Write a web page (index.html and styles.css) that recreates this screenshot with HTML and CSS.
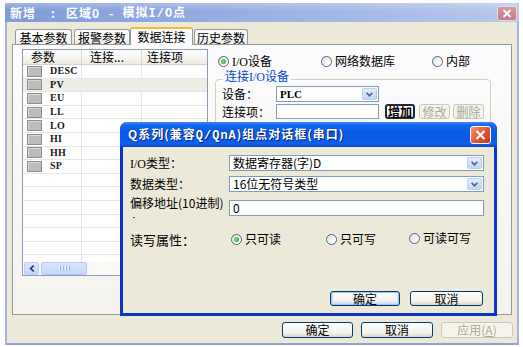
FILE: index.html
```html
<!DOCTYPE html>
<html lang="zh-CN">
<head>
<meta charset="utf-8">
<title>新增 : 区域0 - 模拟I/O点</title>
<link rel="stylesheet" href="styles.css">
</head>
<body>
<div class="window">
  <div class="titlebar">
    <div class="title"><span>新增</span><span class="sep1">:</span><span>区域0</span><span class="sep2">-</span><span>模拟<span class="mono">I/O</span>点</span></div>
    <div class="close-inactive"><svg width="10" height="9" viewBox="0 0 10 9"><path d="M1.5 1L8.5 8M8.5 1L1.5 8" stroke="#fff" stroke-width="1.8"/></svg></div>
  </div>
  <div class="content">
    <div class="tabs">
      <div class="tab t1">基本参数</div>
      <div class="tab t2">报警参数</div>
      <div class="tab t3 active">数据连接</div>
      <div class="tab t4">历史参数</div>
    </div>
    <div class="panel">
      <div class="list">
        <div class="lhead"><div class="c1">参数</div><div class="c2">连接...</div><div class="c3">连接项</div></div>
        <div class="lbody">
          <div class="row"><div class="c1"><i class="ico"></i><span class="pn">DESC</span></div><div class="c2"></div><div class="c3"></div></div>
          <div class="row sel"><div class="c1"><i class="ico"></i><span class="pn">PV</span></div><div class="c2"></div><div class="c3"></div></div>
          <div class="row"><div class="c1"><i class="ico"></i><span class="pn">EU</span></div><div class="c2"></div><div class="c3"></div></div>
          <div class="row"><div class="c1"><i class="ico"></i><span class="pn">LL</span></div><div class="c2"></div><div class="c3"></div></div>
          <div class="row"><div class="c1"><i class="ico"></i><span class="pn">LO</span></div><div class="c2"></div><div class="c3"></div></div>
          <div class="row"><div class="c1"><i class="ico"></i><span class="pn">HI</span></div><div class="c2"></div><div class="c3"></div></div>
          <div class="row"><div class="c1"><i class="ico"></i><span class="pn">HH</span></div><div class="c2"></div><div class="c3"></div></div>
          <div class="row"><div class="c1"><i class="ico"></i><span class="pn">SP</span></div><div class="c2"></div><div class="c3"></div></div>
          <div class="row"><div class="c1"></div><div class="c2"></div><div class="c3"></div></div>
          <div class="row"><div class="c1"></div><div class="c2"></div><div class="c3"></div></div>
          <div class="row"><div class="c1"></div><div class="c2"></div><div class="c3"></div></div>
          <div class="row"><div class="c1"></div><div class="c2"></div><div class="c3"></div></div>
          <div class="row"><div class="c1"></div><div class="c2"></div><div class="c3"></div></div>
          <div class="row"><div class="c1"></div><div class="c2"></div><div class="c3"></div></div>
          <div class="row"><div class="c1"></div><div class="c2"></div><div class="c3"></div></div>
        </div>
        <div class="hscroll">
          <div class="sb-btn"><svg width="6" height="7" viewBox="0 0 6 7"><path d="M4.8 0.6L1.6 3.5L4.8 6.4" fill="none" stroke="#23346A" stroke-width="1.6"/></svg></div>
          <div class="sb-thumb"><i></i><i></i><i></i><i></i></div>
        </div>
      </div>
      <div class="right">
        <div class="radios">
          <div class="opt o1"><i class="radio on"></i><span><span class="lat">I/O</span>设备</span></div>
          <div class="opt o2"><i class="radio"></i><span>网络数据库</span></div>
          <div class="opt o3"><i class="radio"></i><span>内部</span></div>
        </div>
        <fieldset class="group">
          <legend>连接<span class="lat">I/O</span>设备</legend>
          <div class="grow g1">
            <span class="glabel">设备：</span>
            <div class="combo small"><span class="lat val plc">PLC</span><i class="dd"><svg width="7" height="5" viewBox="0 0 7 5"><path d="M0.6 0.8L3.5 3.8L6.4 0.8" fill="none" stroke="#4D6185" stroke-width="1.6"/></svg></i></div>
          </div>
          <div class="grow g2">
            <span class="glabel">连接项：</span>
            <div class="edit small"></div>
            <div class="btn focus b-add">增加</div>
            <div class="btn disabled b-mod">修改</div>
            <div class="btn disabled b-del">删除</div>
          </div>
        </fieldset>
      </div>
    </div>
    <div class="footer">
      <div class="btn fbtn">确定</div>
      <div class="btn fbtn">取消</div>
      <div class="btn fbtn disabled">应用(<u>A</u>)</div>
    </div>
  </div>

  <div class="dialog">
    <div class="dtitle">
      <span class="dtext">Q系列(兼容<span class="mono">Q/QnA</span>)组点对话框(串口)</span>
      <div class="dclose"><svg width="11" height="10" viewBox="0 0 11 10"><path d="M1.5 1L9.5 9M9.5 1L1.5 9" stroke="#fff" stroke-width="2"/></svg></div>
    </div>
    <div class="dbody">
      <div class="frow r1">
        <div class="flabel"><span class="lat">I/O</span>类型：</div>
        <div class="combo fctl"><span class="val">数据寄存器(字)D</span><i class="dd"><svg width="7" height="5" viewBox="0 0 7 5"><path d="M0.6 0.8L3.5 3.8L6.4 0.8" fill="none" stroke="#4D6185" stroke-width="1.6"/></svg></i></div>
      </div>
      <div class="frow r2">
        <div class="flabel">数据类型：</div>
        <div class="combo fctl"><span class="val">16位无符号类型</span><i class="dd"><svg width="7" height="5" viewBox="0 0 7 5"><path d="M0.6 0.8L3.5 3.8L6.4 0.8" fill="none" stroke="#4D6185" stroke-width="1.6"/></svg></i></div>
      </div>
      <div class="frow r3">
        <div class="flabel multi"><span>偏移地址(10进制)</span><i class="dot"></i></div>
        <div class="edit fctl"><span class="val">0</span></div>
      </div>
      <div class="frow r4">
        <div class="flabel big">读写属性：</div>
        <div class="dradios">
          <div class="opt d1"><i class="radio on"></i><span>只可读</span></div>
          <div class="opt d2"><i class="radio"></i><span>只可写</span></div>
          <div class="opt d3"><i class="radio"></i><span>可读可写</span></div>
        </div>
      </div>
      <div class="dbuttons">
        <div class="btn default db-ok">确定</div>
        <div class="btn db-cancel">取消</div>
      </div>
    </div>
  </div>
</div>
</body>
</html>
```
FILE: styles.css
```css
* { box-sizing: border-box; }
html, body { margin: 0; padding: 0; background: #fff; }
body {
  font-family: "Noto Sans CJK SC", "Noto Sans", sans-serif;
  font-size: 12px;
  color: #000;
  line-height: 1;
}
.lat { font-family: "Liberation Serif", "Noto Sans CJK SC", serif; }
.mono { font-family: "Liberation Mono", monospace; }

/* ---------- outer window ---------- */
.window {
  position: relative;
  margin: 3px 0 0 5px;
  width: 514px;
  height: 342px;
  background: #ECE9D8;
  border: 2px solid #A3B5DE;
  border-top: 0;
  border-bottom-color: #8EA3D3;
  display: flex;
  flex-direction: column;
}
.titlebar {
  height: 19px;
  margin: 0 -2px;
  display: flex;
  align-items: center;
  justify-content: space-between;
  padding: 0 2px 0 5px;
  background:
    linear-gradient(to bottom, rgba(255,255,255,0.25), rgba(255,255,255,0) 40%),
    linear-gradient(to right, #7F9CD8, #9DB3E3 55%, #B9C9EC);
  border-radius: 4px 4px 0 0;
}
.title {
  color: #fff;
  font-weight: bold;
  display: flex;
  align-items: center;
  white-space: nowrap;
  letter-spacing: 1px;
}
.sep1 { margin: 0 10px 0 15px; }
.sep2 { margin: 0 8px 0 9px; }
.close-inactive {
  width: 20px;
  height: 15px;
  margin-top: 2px;
  border: 1px solid #E6D6DC;
  border-radius: 3px;
  background: linear-gradient(#D49AA0, #BF7C84);
  display: flex;
  align-items: center;
  justify-content: center;
}

.content {
  flex: 1;
  display: flex;
  flex-direction: column;
  padding: 5px 0 0 5px;
}

/* ---------- tabs ---------- */
.tabs {
  display: flex;
  align-items: flex-end;
  height: 17px;
  margin-left: 3px;
  position: relative;
  z-index: 1;
}
.tab {
  height: 15px;
  border: 1px solid #919B9C;
  border-bottom: 0;
  border-radius: 3px 3px 0 0;
  background: linear-gradient(#FFFFFF, #FAFAF8 50%, #ECEBE6);
  display: flex;
  align-items: center;
  justify-content: center;
  padding-top: 1px;
}
.t1 { width: 57px; margin-right: 2px; }
.t2 { width: 56px; }
.t3 { width: 63px; }
.t4 { width: 54px; margin-left: 1px; }
.tab.active {
  height: 18px;
  margin-bottom: -1px;
  background: #FCFCFE;
  border-top: 2px solid #F6B93E;
  padding-top: 0;
}

/* ---------- panel ---------- */
.panel {
  width: 500px;
  height: 271px;
  border: 1px solid #919B9C;
  background: linear-gradient(#FCFCFE, #F4F3EE);
  display: flex;
  align-items: flex-start;
  padding: 4px 0 0 9px;
}
.list {
  width: 186px;
  height: 227px;
  border: 1px solid #8C9CB6;
  background: #fff;
  display: flex;
  flex-direction: column;
  overflow: hidden;
  flex: none;
}
.lhead {
  height: 15px;
  flex: none;
  display: flex;
  background: linear-gradient(#FFFFFF, #F4F3EE 70%, #EBEADB);
  border-bottom: 1px solid #D6D2C2;
}
.lhead > div {
  display: flex;
  align-items: center;
  padding-left: 8px;
}
.lhead .c3 { padding-left: 5px; }
.c1 { width: 59px; flex: none; }
.c2 { width: 60px; flex: none; }
.c3 { flex: 1; }
.lhead .c1, .lhead .c2 { border-right: 1px solid #DCD9CB; }
.lbody { flex: 1; overflow: hidden; }
.row {
  height: 13.6px;
  display: flex;
  border-bottom: 1px solid #E6E6E6;
}
.row .c1, .row .c2 { border-right: 1px solid #E6E6E6; }
.row .c1 { display: flex; align-items: center; padding-left: 4px; }
.row.sel { background: #EEEDE6; }
.row.sel .c1, .row.sel .c2 { border-right-color: transparent; }
.ico {
  width: 15px;
  height: 11px;
  background: #BCBCBC;
  border: 1px solid #8C8C8C;
  box-shadow: inset 1px 1px 0 #D8D8D8;
  margin-right: 8px;
  flex: none;
}
.pn {
  font-family: "Liberation Serif", serif;
  font-size: 10px;
  font-weight: bold;
  color: #1A1A1A;
  letter-spacing: 0.3px;
}
.hscroll {
  height: 13px;
  flex: none;
  display: flex;
  align-items: stretch;
  background: #FAFAF6;
  padding-left: 1px;
}
.sb-btn {
  width: 15px;
  border: 1px solid #BCCEF4;
  border-radius: 2px;
  background: linear-gradient(#DCE6FD, #C3D4FB);
  display: flex;
  align-items: center;
  justify-content: center;
}
.sb-thumb {
  width: 46px;
  margin-left: 2px;
  border: 1px solid #B5C9F3;
  border-radius: 2px;
  background: linear-gradient(to bottom, #D9E4FD, #C6D6FB);
  display: flex;
  align-items: center;
  justify-content: center;
  gap: 1px;
}
.sb-thumb i {
  width: 1px;
  height: 5px;
  background: #EEF3FF;
  box-shadow: 1px 0 0 #9CB1E2;
  margin-right: 1px;
}

/* ---------- right side ---------- */
.right {
  margin-left: 7px;
  width: 276px;
  display: flex;
  flex-direction: column;
  padding-top: 5px;
}
.radios {
  height: 14px;
  display: flex;
  align-items: center;
  padding-left: 3px;
}
.opt {
  display: flex;
  align-items: center;
  gap: 3px;
  white-space: nowrap;
}
.o1 { width: 103px; }
.o2 { width: 111px; }
.radio {
  position: relative;
  width: 11px;
  height: 11px;
  border-radius: 50%;
  border: 1px solid #4A6689;
  background: linear-gradient(135deg, #DCDCD6, #FFFFFF 75%);
  flex: none;
}
.radio.on::after {
  content: "";
  position: absolute;
  left: 2px;
  top: 2px;
  width: 5px;
  height: 5px;
  border-radius: 50%;
  background: radial-gradient(circle at 40% 40%, #7AE07A, #21A121);
}
.group {
  margin: 2px 0 0 0;
  padding: 0 6px;
  height: 70px;
  min-width: 0;
  border: 1px solid #D0D0BF;
  border-radius: 4px;
}
.group legend {
  color: #0046D5;
  padding: 0 2px 6px;
  margin-left: 1px;
  line-height: 12px;
  height: 18px;
}
.grow { display: flex; align-items: center; }
.g1 { margin-top: -2px; height: 16px; }
.g2 { margin-top: 2px; height: 15px; }
.glabel { width: 54px; flex: none; white-space: nowrap; }

.combo, .edit {
  background: #fff;
  border: 1px solid #7F9DB9;
  display: flex;
  align-items: center;
  padding-left: 3px;
  flex: none;
}
.combo.small { width: 103px; height: 16px; }
.edit.small { width: 103px; height: 15px; }
.combo .val { flex: 1; white-space: nowrap; }
.plc { font-weight: bold; font-size: 11px; }
.dd {
  width: 15px;
  height: 12px;
  margin-right: 1px;
  border: 1px solid #BBCDF5;
  border-radius: 2px;
  background: linear-gradient(#E4ECFE, #C4D5FB);
  display: flex;
  align-items: center;
  justify-content: center;
  flex: none;
}

/* ---------- buttons ---------- */
.btn {
  height: 15px;
  border: 1px solid #003C74;
  border-radius: 3px;
  background: linear-gradient(#FFFFFF, #F3F2EC 70%, #D8D4C7);
  display: flex;
  align-items: center;
  justify-content: center;
  white-space: nowrap;
  flex: none;
}
.btn.disabled {
  border-color: #C9C7BA;
  color: #ACA899;
  background: #F5F4EA;
}
.btn.focus {
  border: 2px solid #1E2A3A;
  font-weight: bold;
}
.btn.default {
  box-shadow: inset 0 0 0 1px #A8C6F5, inset 0 -1px 0 2px #D0E0FA;
}
.b-add { width: 30px; margin-left: 6px; }
.b-mod { width: 31px; margin-left: 4px; }
.b-del { width: 31px; margin-left: 3px; }

.footer {
  height: 28px;
  display: flex;
  justify-content: flex-end;
  align-items: flex-start;
  gap: 8px;
  padding: 7px 4px 0 0;
}
.fbtn { width: 71px; height: 16px; }
.fbtn + .fbtn { width: 72px; }

/* ---------- overlay dialog ---------- */
.dialog {
  position: absolute;
  left: 113px;
  top: 119px;
  width: 377px;
  height: 194px;
  display: flex;
  flex-direction: column;
  background: #ECE9D8;
  border: 3px solid #0A34CC;
  border-top: 0;
  border-radius: 7px 7px 0 0;
  z-index: 5;
}
.dtitle {
  height: 25px;
  margin: 0 -3px;
  padding: 0 6px 0 8px;
  border-radius: 7px 7px 0 0;
  display: flex;
  align-items: center;
  justify-content: space-between;
  color: #fff;
  font-weight: bold;
  text-shadow: 1px 1px 0 #0A1E6E;
  background: linear-gradient(to bottom, #3D8BF8 0%, #1567EE 12%, #0858E2 40%, #0A5CE8 70%, #0F60EE 88%, #0746C8 100%);
  white-space: nowrap;
}
.dtext { letter-spacing: 1px; }
.dclose {
  width: 21px;
  height: 18px;
  margin-top: 1px;
  border: 1px solid #fff;
  border-radius: 3px;
  background: linear-gradient(135deg, #F09A7A, #DE5530 55%, #C8391A);
  display: flex;
  align-items: center;
  justify-content: center;
}
.dbody {
  flex: 1;
  display: flex;
  flex-direction: column;
  padding: 8px 10px 7px 7px;
}
.frow { display: flex; align-items: center; }
.flabel { width: 99px; flex: none; white-space: nowrap; }
.fctl { width: 255px; }
.combo.fctl { height: 16px; }
.edit.fctl { height: 16px; }
.r1 { height: 16px; }
.r2 { height: 16px; margin-top: 5px; }
.r3 { margin-top: 5px; align-items: flex-start; }
.r3 .edit { margin-top: 3px; }
.flabel.multi { display: flex; flex-direction: column; line-height: 12px; }
.dot {
  width: 2px;
  height: 1px;
  background: #555;
  margin: 8px 0 0 3px;
}
.r4 { height: 12px; margin-top: 15px; }
.flabel.big { font-size: 13px; }
.dradios { display: flex; align-items: center; }
.d1 { width: 95px; margin-left: 2px; }
.d2 { width: 83px; }
.d3 { margin-top: -2px; }
.dbuttons {
  margin-top: auto;
  display: flex;
  justify-content: flex-end;
  gap: 10px;
  padding-right: 1px;
}
.db-ok { width: 70px; }
.db-cancel { width: 73px; }
```
